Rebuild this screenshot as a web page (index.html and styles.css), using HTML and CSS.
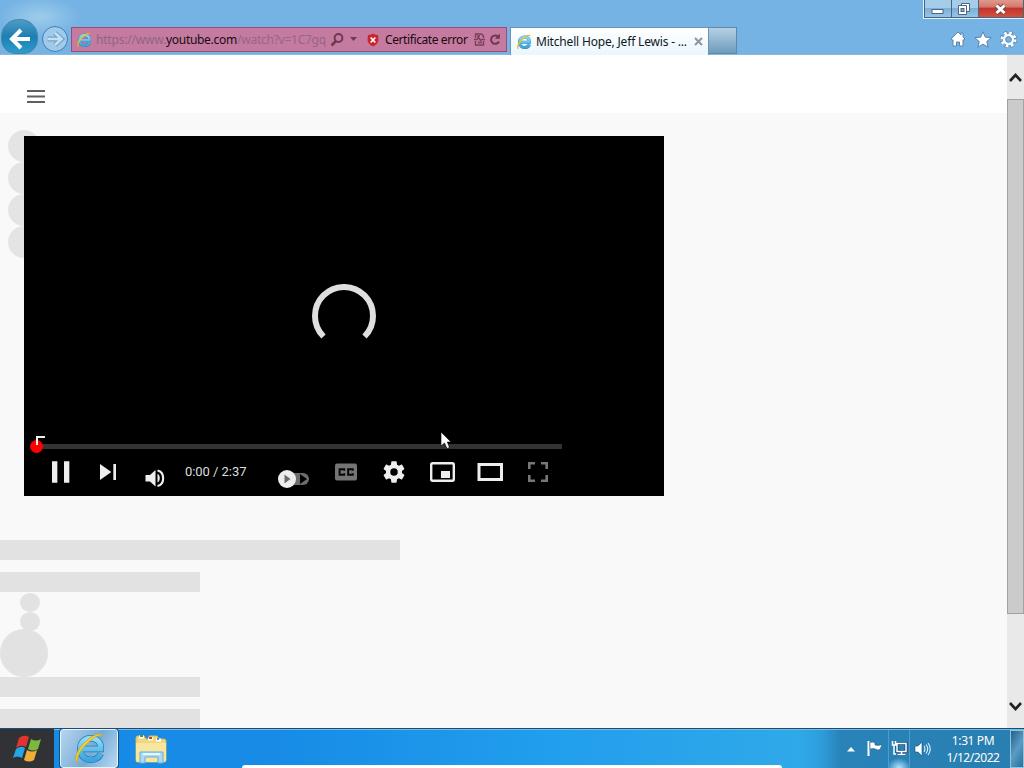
FILE: index.html
```html
<!DOCTYPE html>
<html lang="en">
<head>
<meta charset="utf-8">
<title>Mitchell Hope, Jeff Lewis</title>
<link rel="stylesheet" href="styles.css">
</head>
<body>
<svg class="defs" width="0" height="0">
  <defs>
    <linearGradient id="blue" x1="0" y1="0" x2="0" y2="1"><stop offset="0" stop-color="#8fdcf8"/><stop offset="1" stop-color="#3aa5e0"/></linearGradient>
    <symbol id="ie" viewBox="0 0 32 32">
      <path d="M27 21C25 25.500 21.500 27 17 27C11 27 7 22.500 7 16.500C7 10.500 11 6 17 6C23 6 27.500 10 27 16.500H9" fill="none" stroke="#2a78ad" stroke-width="6.200"/>
      <path d="M27 21C25 25.500 21.500 27 17 27C11 27 7 22.500 7 16.500C7 10.500 11 6 17 6C23 6 27.500 10 27 16.500H9" fill="none" stroke="url(#blue)" stroke-width="4.800"/>
      <path d="M5 30C-1 28 5 15 13 8.500C20 2 28 0 29 4C25 2 19 6 14 11C7 17 2.500 26 5 30Z" fill="#f3d12f" stroke="#c9a32a" stroke-width=".7"/>
    </symbol>
  </defs>
</svg>
<div class="desktop">
  <header class="chrome">
    <div class="titlebar">
      <div class="window-controls">
        <span class="wc"><svg width="26" height="18"><rect x="7" y="9.500" width="11" height="4" fill="#fff" stroke="#4e6485"/></svg></span>
        <span class="wc"><svg width="26" height="18"><path d="M9.500 3.500h8v8h-8z" fill="#fff" stroke="#4e6485"/><path d="M6.500 5.500h8v9h-8z" fill="#fff" stroke="#4e6485"/><rect x="9" y="8.500" width="3" height="3" fill="#7ab0da" stroke="#4e6485"/></svg></span>
        <span class="wc close"><svg width="45" height="18"><path d="M17.500 5.500l8 7.500m0-7.500l-8 7.500" stroke="#6a4850" stroke-width="5"/><path d="M17.500 5.500l8 7.500m0-7.500l-8 7.500" stroke="#fff" stroke-width="3"/></svg></span>
      </div>
    </div>
    <div class="navrow">
      <span class="back"><svg width="36" height="36"><path d="M29 20H11M20 11l-9 9 9 9" fill="none" stroke="#fff" stroke-width="4"/></svg></span>
      <span class="forward"><svg width="24" height="24"><path d="M4.500 12H18M12 6l6.500 6L12 18" fill="none" stroke="#71a4c9" stroke-width="5"/><path d="M4.500 12H18M12 6l6.500 6L12 18" fill="none" stroke="#c5e0f3" stroke-width="2.500"/></svg></span>
      <div class="address">
        <svg class="ie-small" width="16" height="16"><use href="#ie"/></svg>
        <span class="url"><span class="scheme">https://www.</span><span class="host">youtube.com</span><span class="path">/watch?v=1C7gq</span></span>
        <svg class="search" width="14" height="14"><circle cx="8.500" cy="5" r="3.900" fill="none" stroke="#71384f" stroke-width="2"/><path d="M6 8L1.500 12.500" stroke="#71384f" stroke-width="2.500"/></svg>
        <svg class="drop" width="8" height="5"><path d="M0 0h7L3.500 4z" fill="#71384f"/></svg>
        <svg class="shield" width="12" height="14"><path d="M6 .5Q8.500 2 11 2L11.500 7Q11 11 6 13.500Q1 11 .5 7L1 2Q3.500 2 6 .5Z" fill="#ca2630"/><path d="M3.700 4.500l4.600 5m0-5l-4.600 5" stroke="#fff" stroke-width="1.600"/></svg>
        <span class="cert">Certificate error</span>
        <svg class="compat" width="11" height="13"><path d="M1.500 5V1h6l2 2v2M1.500 8v4h8V8M0 6.500h3l1.500-2 2 3 1.500-1h3M4 9.500h4M3 3h3" fill="none" stroke="#7a3f5a" stroke-width="1.400"/></svg>
        <svg class="reload" width="12" height="13"><path d="M9.500 4A4.200 4.200 0 1 0 10 8.500" fill="none" stroke="#71384f" stroke-width="2"/><path d="M10.800.5v5.300H5.800z" fill="#71384f"/></svg>
      </div>
      <div class="tab"><svg width="16" height="16"><use href="#ie"/></svg><span class="tab-title">Mitchell Hope, Jeff Lewis - ...</span><svg class="tab-close" width="9" height="9"><path d="M1 1l7 7m0-7L1 8" stroke="#8b98a2" stroke-width="2"/></svg></div>
      <div class="newtab"></div>
      <div class="tools">
        <svg width="16" height="16"><path d="M8 1L1 8l1.500 1L3 8.700V15h3.500v-4h3v4H13V8.700l.5.3L15 8l-2-2V2h-2v2z" fill="#fff" stroke="#557ba3" stroke-width=".9"/></svg>
        <svg width="18" height="17"><path d="M9 .8l2.300 5.400 5.900.5-4.500 3.800 1.400 5.700L9 13.100l-5.100 3.100 1.400-5.700L.8 6.700l5.900-.5z" fill="#fff" stroke="#557ba3" stroke-width=".9"/></svg>
        <svg width="17" height="17"><circle cx="8.500" cy="8.500" r="6.500" fill="none" stroke="#557ba3" stroke-width="4" stroke-dasharray="3.200 1.905"/><circle cx="8.500" cy="8.500" r="6.500" fill="none" stroke="#fff" stroke-width="3" stroke-dasharray="2.500 2.605"/><circle cx="8.500" cy="8.500" r="4.300" fill="none" stroke="#fff" stroke-width="2.500"/><circle cx="8.500" cy="8.500" r="2.900" fill="none" stroke="#557ba3" stroke-width=".8"/></svg>
      </div>
    </div>
  </header>

  <main class="viewport">
    <div class="page">
      <div class="masthead"><svg width="18" height="13"><path d="M0 1h18M0 6.500h18M0 12h18" stroke="#606060" stroke-width="2"/></svg></div>
      <div class="watch">
        <div class="guide"><i class="dot"></i><i class="dot"></i><i class="dot"></i><i class="dot"></i></div>
        <div class="player">
          <div class="stage">
            <svg width="64" height="64"><path d="M11.500 52.500A29 29 0 1 1 52.500 52.500" fill="none" stroke="#dfdfdf" stroke-width="6"/></svg>
          </div>
          <div class="progress"><i class="scrubber"></i><i class="corner"></i></div>
          <div class="controls">
            <svg width="48" height="48" viewBox="0 0 36 36"><path d="M12 26h4V10h-4zM21 26h4V10h-4z" fill="#eee"/></svg>
            <svg width="48" height="48" viewBox="0 0 36 36"><path d="M12 24l8.500-6L12 12zM22 12v12h2V12z" fill="#eee"/></svg>
            <svg class="volume" width="48" height="48" viewBox="0 0 48 48"><path d="M13.500 27v6.500H18L23.500 38.500V22L18 27zM25.500 25.800v8.700c3-1.500 3-7.200 0-8.700z" fill="#eee"/><path d="M25.500 22.500c7.500 1.500 7.500 14 0 15.500" fill="none" stroke="#eee" stroke-width="2.200"/></svg>
            <span class="time">0:00 / 2:37</span>
            <svg class="autoplay" width="36" height="48"><rect x="5" y="25" width="30" height="12" rx="6" fill="#6d6d6d"/><path d="M26 26v10l7-5z" fill="#000"/><circle cx="13" cy="31" r="9" fill="#eee"/><path d="M10.500 26.500v9l6-4.500z" fill="#6d6d6d"/></svg>
            <svg width="48" height="48"><rect x="13" y="15.500" width="22" height="17" rx="2" fill="#747474"/><path d="M22.200 22.800v-1.500h-4.600v5.400h4.600v-1.500M30.800 22.800v-1.500h-4.600v5.400h4.600v-1.500" fill="none" stroke="#050505" stroke-width="1.900"/></svg>
            <svg width="48" height="48" viewBox="0 0 36 36"><path d="M23.940 18.780c.03-.25.050-.51.050-.78s-.02-.52-.05-.78l1.680-1.320c.15-.12.190-.33.090-.51l-1.600-2.760c-.09-.17-.31-.24-.48-.17l-1.990.8c-.41-.32-.86-.58-1.350-.78l-.3-2.120c-.02-.19-.19-.33-.39-.33h-3.200c-.2 0-.36.140-.39.330l-.3 2.120c-.48.200-.93.470-1.350.780l-1.990-.8c-.18-.07-.39 0-.49.170l-1.600 2.760c-.1.170-.05.390.090.510l1.680 1.320c-.03.250-.05.520-.05.780s.02.520.050.780l-1.680 1.320c-.15.120-.19.330-.09.510l1.600 2.760c.09.170.310.240.480.170l1.990-.8c.410.320.860.580 1.350.780l.3 2.120c.02.190.190.330.390.330h3.200c.2 0 .36-.14.390-.33l.3-2.120c.48-.2.930-.47 1.350-.78l1.990.8c.18.070.390 0 .49-.17l1.600-2.760c.09-.17.050-.39-.09-.51zM18 20.800a2.800 2.800 0 1 1 0-5.600 2.800 2.800 0 0 1 0 5.600z" fill="#eee"/></svg>
            <svg width="48" height="48"><rect x="13.200" y="15.200" width="22.600" height="17.600" rx="1.500" fill="none" stroke="#eee" stroke-width="2.400"/><rect x="23" y="23" width="9" height="7" fill="#eee"/></svg>
            <svg width="48" height="48"><rect x="13" y="16.500" width="22.500" height="15" fill="none" stroke="#eee" stroke-width="3"/></svg>
            <svg width="48" height="48"><path d="M15.300 21v-5.700H21M27 15.300h5.700V21M32.700 27v5.700H27M21 32.700h-5.700V27" fill="none" stroke="#777" stroke-width="2.600"/></svg>
          </div>
        </div>
      </div>
      <div class="skeleton">
        <i class="bar wide"></i>
        <i class="bar"></i>
        <div class="stack"><i class="ball"></i><i class="ball"></i></div>
        <i class="avatar"></i>
        <i class="bar"></i>
        <i class="bar"></i>
      </div>
    </div>
    <div class="scrollbar">
      <svg width="17" height="44"><path d="M3 26l5.500-6 5.500 6" fill="none" stroke="#222" stroke-width="2.600"/></svg>
      <div class="thumb"></div>
      <svg class="down" width="17" height="44"><path d="M3 19l5.500 6 5.500-6" fill="none" stroke="#222" stroke-width="2.600"/></svg>
    </div>
  </main>

  <footer class="taskbar">
    <div class="start"><svg width="30" height="28" viewBox="0 0 30 28"><path d="M6 3q5-4 10-1l-3 10q-5-3-10 1z" fill="#e3332f"/><path d="M18 4q5 3 10 0l-3 10q-5 3-10 0z" fill="#7cb83e"/><path d="M3 14q5-4 9-1l-3 10q-5-3-9 0z" fill="#24a7e5"/><path d="M14 15q5 3 10 0l-3 10q-5 3-10 0z" fill="#f3ae39"/></svg></div>
    <div class="task-active"><svg width="33" height="33"><use href="#ie"/></svg></div>
    <div class="explorer"><svg width="34" height="32"><path d="M2 4q0-2 2-2h6l2 3h3V2h8l2 3h5q2 0 2 2v19q0 2-2 2H3q-1 0-1-2z" fill="#f0d67c" stroke="#d1b75e"/><path d="M5 3h5M14 5h5M22 6h5" stroke="#fff" stroke-width="3"/><path d="M6 2h3" stroke="#3c9953" stroke-width="2"/><path d="M15 4h3" stroke="#bd4a35" stroke-width="2"/><path d="M23 5h2" stroke="#478cc5" stroke-width="2"/><path d="M2 9h30v17q0 2-2 2H4q-2 0-2-2z" fill="#f7e6a0"/><path d="M6 29V18h23v11h-5v-6H11v6z" fill="#a9dbf4" stroke="#68aed4"/><path d="M9 20h17" stroke="#e5f7ff" stroke-width="2"/></svg></div>
    <div class="tray">
      <svg class="up" width="8" height="5"><path d="M0 4.500L4 0l4 4.500z" fill="#fff"/></svg>
      <svg class="flag" width="16" height="17"><path d="M1.500 1v15" stroke="#fff" stroke-width="2"/><path d="M3 2.500q3-1 5 .5v2q3 1 7-.5l-2 5q-2.500 1-4.500-.5-2-1-5.500 0z" fill="#fff" stroke="#174d79" stroke-width=".5"/></svg>
      <div class="network"><svg width="17" height="17"><path d="M6 3.500h9v8H6zM10.500 12v2.500M6.500 14.500h8" fill="none" stroke="#174d79" stroke-width="3"/><path d="M6 3.500h9v8H6zM10.500 12v2.500M6.500 14.500h8M1.500 1v4h3V1M3 5v9h2" fill="none" stroke="#fff" stroke-width="1.500"/></svg></div>
      <svg class="sound" width="17" height="16"><path d="M1 5v6h3l4 4V1L4 5z" fill="#fff" stroke="#174d79" stroke-width=".6"/><path d="M10 5q2 3 0 6M12 3.500q3.500 4.500 0 9M14 2q4.500 6 0 12" fill="none" stroke="#d8f1ff" stroke-width="1.100"/></svg>
      <div class="clock"><span>1:31 PM</span><span class="date">1/12/2022</span></div>
      <div class="show-desktop"></div>
    </div>
    <div class="peek"></div>
  </footer>
  <svg class="cursor" width="13" height="20"><path d="M1 1v14l3.500-3 2.500 5.500 2.500-1L7.300 11H11z" fill="#fff" stroke="#000" stroke-width=".6"/></svg>
</div>
</body>
</html>
```

FILE: styles.css
```css
* { box-sizing: border-box; }
body { margin: 0; overflow: hidden; font: 12px "Noto Sans", sans-serif; }
svg { display: block; flex: none; }
i { display: block; }
.defs { position: absolute; }
.desktop { position: relative; width: 1024px; height: 768px; display: grid; grid-template-rows: 55px 673px 40px; overflow: hidden; }

.chrome { background: radial-gradient(ellipse 40px 20px at 40px 17px, #9dcdea, transparent), #75b3e4; border-bottom: 1px solid #8db8d9; }
.titlebar { height: 19px; display: flex; justify-content: flex-end; }
.window-controls { display: flex; height: 19px; width: 101px; border: 1px solid #e4f1fa; border-top: 0; border-right: 0; }
.wc { width: 27px; border: 1px solid #48647f; border-top: 0; border-right: 0; background: linear-gradient(#a5cce9 45%, #7dafd7 50%, #94c5e7); }
.close { width: 46px; border-right: 1px solid #48647f; background: linear-gradient(#e09a8f, #d6776b 40%, #c2352c 50%, #d2513e); }
.navrow { height: 35px; display: flex; }
.back { width: 37px; height: 35px; margin-left: 1px; border-radius: 50% 50% 42% 42%; background: linear-gradient(#4f9cc6, #1c7fb3 50%, #2b9ccc); border: 1px solid #4784aa; }
.back svg { margin: -1px; }
.forward { width: 26px; height: 26px; margin: 7px 3px 0 4px; border: 1px solid #467eaf; border-radius: 50%; background: #9fcaea; }
.address { width: 436px; height: 25px; margin-top: 8px; padding-left: 4px; display: flex; align-items: center; background: #c47b9f; border: 1px solid #9a4e75; }
.url { width: 231px; margin-left: 4px; display: flex; white-space: nowrap; font-size: 12px; }
.scheme { width: 70px; color: #8f6685; letter-spacing: -.2px; }
.host { width: 71px; color: #180a12; letter-spacing: -.3px; }
.path { color: #986686; letter-spacing: -.25px; }
.search { margin-left: 3px; }
.drop { margin-left: 6px; }
.shield { margin-left: 9px; }
.cert { width: 84px; margin-left: 6px; white-space: nowrap; color: #180a12; letter-spacing: -.4px; }
.compat { margin-left: 5px; }
.reload { margin-left: 4px; }
.tab { width: 199px; height: 28px; margin: 8px 0 0 3px; padding-left: 5px; display: flex; align-items: center; border: 1px solid #6b95b2; border-bottom: 0; background: linear-gradient(#fff, #eaf6fd); }
.tab-title { width: 154px; margin-left: 4px; white-space: nowrap; color: #101820; letter-spacing: -.18px; }
.tab-close { margin-left: 4px; }
.newtab { width: 28px; height: 27px; margin-top: 8px; border: 1px solid #6388a4; border-left: 0; background: linear-gradient(#b5d1e3, #6d9cbd); }
.tools { margin: 12px 7px 0 auto; display: flex; gap: 8px; }

.viewport { display: grid; grid-template-columns: 1fr 17px; min-height: 0; }
.page { min-width: 0; overflow: hidden; background: #f9f9f9; }
.masthead { height: 58px; padding: 35px 0 0 27px; background: #fff; }
.watch { display: grid; height: 383px; padding: 17px 0 0 8px; grid-template-columns: 16px 640px; }
.guide { width: 32px; }
.dot { width: 32px; height: 32px; border-radius: 50%; background: #e4e4e4; }
.player { z-index: 1; width: 640px; height: 360px; margin-top: 6px; display: flex; flex-direction: column; background: #000; }
.stage { height: 308px; padding: 148px 0 0 288px; }
.progress { position: relative; width: 526px; height: 5px; margin-left: 12px; background: #333; }
.scrubber { position: absolute; left: -6px; top: -4px; width: 13px; height: 13px; border-radius: 50%; background: #f00; }
.corner { position: absolute; left: 0; top: -8px; width: 9px; height: 9px; border: solid #eee; border-width: 2px 0 0 2px; }
.controls { display: flex; height: 48px; margin: -1px 0 0 12px; }
.time { width: 73px; padding-left: 5px; font: 13px/47px Roboto, sans-serif; color: #ddd; letter-spacing: -.05px; white-space: nowrap; }
.autoplay { margin: 0 12px 0 21px; }
.skeleton { padding-top: 44px; }
.bar { width: 200px; height: 20px; background: #e2e2e2; margin-bottom: 12px; }
.bar.wide { width: 400px; }
.stack { height: 36px; margin-top: -11px; padding-left: 20px; }
.ball { width: 20px; height: 19px; border-radius: 50%; background: #e2e2e2; }
.avatar { width: 48px; height: 48px; border-radius: 50%; background: #e2e2e2; }
.scrollbar { display: flex; flex-direction: column; background: #e9e9e9; }
.thumb { height: 515px; background: #cbcbcb; border: 1px solid #a2a2a2; }
.down { margin-top: auto; }

.taskbar { position: relative; display: flex; border-top: 1px solid #164e79; box-shadow: inset 0 1px #7bb9df; background: linear-gradient(90deg, #168ae5 0, #178be6 270px, #219eed 550px, #30a9e9 800px, #2f9cda 822px, #2983b9 840px, #287eaf 100%); }
.start { width: 54px; padding: 6px 0 0 13px; background: #303235; }
.task-active { width: 58px; height: 39px; margin-left: 6px; padding: 2px 0 0 12px; border: 1px solid #e9f5fd; outline: 1px solid #164e79; outline-offset: 0; border-radius: 3px; background: linear-gradient(120deg, #b8d5ed, #75abd8 55%, #b9d9f2); }
.explorer { margin: 5px 0 0 16px; }
.tray { margin-left: auto; display: flex; color: #fff; }
.up { margin: 18px 12px 0 0; }
.flag { margin: 11px 5px 0 0; }
.network { width: 22px; height: 38px; margin-top: 1px; padding: 10px 0 0 2px; border: 1px solid #529bc8; border-width: 0 1px; background: radial-gradient(ellipse 12px 10px at 50% 100%, #b5e5ff, transparent); }
.sound { margin: 12px 0 0 4px; }
.clock { width: 79px; padding: 3px 0 0 5px; display: flex; flex-direction: column; align-items: center; line-height: 17px; letter-spacing: -.4px; }
.date { letter-spacing: -.45px; }
.show-desktop { width: 14px; margin-top: 1px; border: 1px solid #92c3df; background: linear-gradient(120deg, #245f8b, #5a9cc3 50%, #286f9d); }
.peek { position: absolute; left: 242px; bottom: 0; width: 540px; height: 3px; border-radius: 8px 8px 0 0; background: #fff; }
.cursor { position: absolute; z-index: 2; left: 440px; top: 431px; }
```
